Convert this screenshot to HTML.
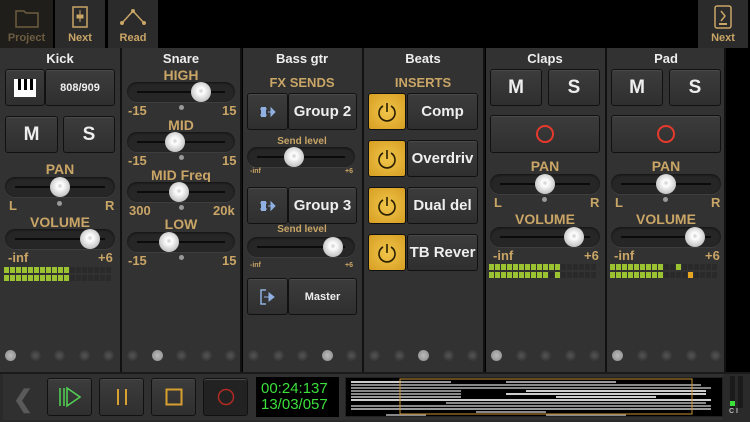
<!DOCTYPE html><html><head><meta charset="utf-8"><style>
*{margin:0;padding:0;box-sizing:border-box}
body{width:750px;height:422px;background:#000;position:relative;overflow:hidden;font-family:"Liberation Sans",sans-serif;font-weight:bold}
.a{position:absolute}
.strip{position:absolute;top:48px;height:324px;background:#323232;border-right:2px solid #111}
.t{position:absolute;color:#eee;font-size:13px;text-align:center}
.g{position:absolute;color:#c9a566;text-align:center;font-size:13px}
.btn{position:absolute;background:linear-gradient(#3c3c3c,#2f2f2f);border:1px solid #111;border-radius:3px;box-shadow:inset 0 1px 0 #4a4a4a;color:#eee;display:flex;align-items:center;justify-content:center}
.sl{position:absolute;height:20px;border-radius:10px;background:#262626;box-shadow:inset 0 1px 2px #111,0 1px 0 #3e3e3e}
.sl i{position:absolute;left:10px;right:10px;top:9px;height:2px;background:#0b0b0b}
.sl b{position:absolute;top:0px;width:20px;height:20px;margin-left:-10px;border-radius:50%;background:radial-gradient(circle at 50% 45%,#ccc 0,#fff 20%,#e8e8e8 40%,#bbb 80%,#888 100%)}
.dot{position:absolute;width:5px;height:5px;border-radius:50%;background:#999}
.bd{position:absolute;width:11px;height:11px;border-radius:50%;background:radial-gradient(#555,#2a2a2a);top:350px}
.bd.on{background:radial-gradient(#bbb,#888)}
.top{position:absolute;top:0;height:48px;background:#2b2b2b;color:#c9a566;font-size:11px;text-align:center}
.top span{position:absolute;bottom:4px;left:0;right:0}
.ins{position:absolute;left:368px;width:38px;height:37px;background:radial-gradient(#f0c54a,#d69e22);border:1px solid #111;border-radius:3px}
.meter{position:absolute;height:14px;display:flex;flex-direction:column;gap:2px}
.meter div{display:flex;gap:1px;height:6px}
.meter s{width:5px;height:6px;background:#2a2a2a}
.meter s.l{background:#9bc230}
.meter s.y{background:#e6a623}
</style></head><body>
<div class="top" style="left:0;width:53px;background:#1f1e1b;color:#6d5d40"><svg class="a" style="left:15px;top:8px" width="24" height="20"><path d="M1 3h8l2 2h12v14H1z" fill="none" stroke="#6d5d40" stroke-width="1.5"/></svg><span>Project</span></div>
<div class="top" style="left:55px;width:50px"><svg class="a" style="left:17px;top:6px" width="16" height="22"><rect x="1" y="1" width="14" height="20" fill="none" stroke="#c9a566" stroke-width="1.5"/><path d="M8 4v12M5 9h6v3H5z" stroke="#c9a566" fill="#c9a566"/></svg><span>Next</span></div>
<div class="top" style="left:108px;width:50px"><svg class="a" style="left:12px;top:8px" width="26" height="18"><path d="M2 15L13 3L24 15" fill="none" stroke="#c9a566" stroke-width="1.5"/><circle cx="2" cy="15" r="2" fill="#c9a566"/><circle cx="13" cy="3" r="2" fill="#c9a566"/><circle cx="24" cy="15" r="2" fill="#c9a566"/></svg><span>Read</span></div>
<div class="top" style="left:698px;width:50px"><svg class="a" style="left:16px;top:5px" width="18" height="24"><rect x="1" y="1" width="16" height="22" rx="2" fill="none" stroke="#c9a566" stroke-width="1.5"/><path d="M7 6l4 5-4 5" fill="none" stroke="#c9a566" stroke-width="1.5"/><rect x="5" y="18" width="8" height="2" fill="#c9a566"/></svg><span>Next</span></div>

<div class="strip" style="left:0;width:122px"></div>
<div class="strip" style="left:122px;width:120px"></div>
<div class="strip" style="left:243px;width:121px"></div>
<div class="strip" style="left:364px;width:121px"></div>
<div class="strip" style="left:486px;width:121px"></div>
<div class="strip" style="left:607px;width:119px"></div>

<div class="t" style="left:0;width:120px;top:51px">Kick</div>
<div class="btn" style="left:5px;top:69px;width:40px;height:37px"><svg width="22" height="18"><rect width="22" height="18" fill="#fff"/><rect x="4" y="0" width="3" height="11" fill="#000"/><rect x="10" y="0" width="3" height="11" fill="#000"/><rect x="16" y="0" width="3" height="11" fill="#000"/></svg></div>
<div class="btn" style="left:45px;top:69px;width:70px;height:37px;font-size:11px">808/909</div>
<div class="btn" style="left:5px;top:116px;width:53px;height:37px;font-size:19px">M</div>
<div class="btn" style="left:63px;top:116px;width:52px;height:37px;font-size:19px">S</div>
<div class="g" style="left:0;width:120px;top:161px;font-size:14px">PAN</div>
<div class="sl" style="left:5px;top:177px;width:110px"><i></i><b style="left:55px"></b></div>
<div class="g" style="left:9px;top:198px">L</div><div class="g" style="left:105px;top:198px">R</div>
<div class="dot" style="left:57px;top:201px"></div>
<div class="g" style="left:0;width:120px;top:214px;font-size:14px">VOLUME</div>
<div class="sl" style="left:5px;top:229px;width:110px"><i></i><b style="left:85px"></b></div>
<div class="g" style="left:8px;top:250px">-inf</div><div class="g" style="left:98px;top:250px">+6</div>
<div class="meter" style="left:4px;top:267px" id="m1"></div>

<div class="t" style="left:122px;width:118px;top:51px">Snare</div>
<div class="g" style="left:122px;width:118px;top:67px;font-size:14px">HIGH</div>
<div class="sl" style="left:127px;top:82px;width:108px"><i></i><b style="left:74px"></b></div>
<div class="g" style="left:128px;top:103px">-15</div><div class="g" style="left:222px;top:103px">15</div><div class="dot" style="left:179px;top:105px"></div>
<div class="g" style="left:122px;width:118px;top:117px;font-size:14px">MID</div>
<div class="sl" style="left:127px;top:132px;width:108px"><i></i><b style="left:48px"></b></div>
<div class="g" style="left:128px;top:153px">-15</div><div class="g" style="left:222px;top:153px">15</div><div class="dot" style="left:179px;top:155px"></div>
<div class="g" style="left:122px;width:118px;top:167px;font-size:14px">MID Freq</div>
<div class="sl" style="left:127px;top:182px;width:108px"><i></i><b style="left:52px"></b></div>
<div class="g" style="left:129px;top:203px">300</div><div class="g" style="left:213px;top:203px">20k</div><div class="dot" style="left:179px;top:205px"></div>
<div class="g" style="left:122px;width:118px;top:216px;font-size:14px">LOW</div>
<div class="sl" style="left:127px;top:232px;width:108px"><i></i><b style="left:42px"></b></div>
<div class="g" style="left:128px;top:253px">-15</div><div class="g" style="left:222px;top:253px">15</div><div class="dot" style="left:179px;top:255px"></div>

<div class="t" style="left:243px;width:118px;top:51px">Bass gtr</div>
<div class="g" style="left:243px;width:118px;top:75px">FX SENDS</div>
<div class="btn" style="left:247px;top:93px;width:41px;height:37px"><svg width="18" height="14"><rect x="2" y="2" width="5" height="10" fill="#8fb0e0"/><path d="M1 4h7M1 10h7" stroke="#8fb0e0"/><path d="M9 7h4M12 3l4 4-4 4z" fill="#8fb0e0" stroke="#8fb0e0"/></svg></div>
<div class="btn" style="left:288px;top:93px;width:69px;height:37px;font-size:15px">Group 2</div>
<div class="g" style="left:243px;width:118px;top:136px;font-size:10px">Send level</div>
<div class="sl" style="left:247px;top:147px;width:108px"><i></i><b style="left:47px"></b></div>
<div class="g" style="left:250px;top:168px;font-size:7px">-inf</div><div class="g" style="left:345px;top:168px;font-size:7px">+6</div>
<div class="btn" style="left:247px;top:187px;width:41px;height:37px"><svg width="18" height="14"><rect x="2" y="2" width="5" height="10" fill="#8fb0e0"/><path d="M1 4h7M1 10h7" stroke="#8fb0e0"/><path d="M9 7h4M12 3l4 4-4 4z" fill="#8fb0e0" stroke="#8fb0e0"/></svg></div>
<div class="btn" style="left:288px;top:187px;width:69px;height:37px;font-size:15px">Group 3</div>
<div class="g" style="left:243px;width:118px;top:224px;font-size:10px">Send level</div>
<div class="sl" style="left:247px;top:237px;width:108px"><i></i><b style="left:86px"></b></div>
<div class="g" style="left:250px;top:262px;font-size:7px">-inf</div><div class="g" style="left:345px;top:262px;font-size:7px">+6</div>
<div class="btn" style="left:247px;top:278px;width:41px;height:37px"><svg width="16" height="16"><path d="M6 1H1v14h5" fill="none" stroke="#8fb0e0" stroke-width="1.5"/><path d="M4 8h7M9 4l5 4-5 4z" fill="#8fb0e0" stroke="#8fb0e0"/></svg></div>
<div class="btn" style="left:288px;top:278px;width:69px;height:37px;font-size:11px">Master</div>

<div class="t" style="left:364px;width:118px;top:51px">Beats</div>
<div class="g" style="left:364px;width:118px;top:75px">INSERTS</div>
<div class="ins" style="top:93px"></div><div class="btn" style="left:407px;top:93px;width:71px;height:37px;font-size:15px">Comp</div>
<div class="ins" style="top:140px"></div><div class="btn" style="left:407px;top:140px;width:71px;height:37px;font-size:15px">Overdriv</div>
<div class="ins" style="top:187px"></div><div class="btn" style="left:407px;top:187px;width:71px;height:37px;font-size:15px">Dual del</div>
<div class="ins" style="top:234px"></div><div class="btn" style="left:407px;top:234px;width:71px;height:37px;font-size:15px">TB Rever</div>
<svg class="a" style="left:377px;top:102px" width="20" height="210"><g fill="none" stroke="#2a2000" stroke-width="1.6"><path d="M6 4a8 8 0 1 0 8 0M10 1v9"/><path transform="translate(0,47)" d="M6 4a8 8 0 1 0 8 0M10 1v9"/><path transform="translate(0,94)" d="M6 4a8 8 0 1 0 8 0M10 1v9"/><path transform="translate(0,141)" d="M6 4a8 8 0 1 0 8 0M10 1v9"/></g></svg>

<div class="t" style="left:486px;width:118px;top:51px">Claps</div>
<div class="t" style="left:607px;width:118px;top:51px">Pad</div>
<div class="btn" style="left:490px;top:69px;width:52px;height:37px;font-size:19px">M</div>
<div class="btn" style="left:548px;top:69px;width:52px;height:37px;font-size:19px">S</div>
<div class="btn" style="left:611px;top:69px;width:52px;height:37px;font-size:19px">M</div>
<div class="btn" style="left:669px;top:69px;width:52px;height:37px;font-size:19px">S</div>
<div class="btn" style="left:490px;top:115px;width:110px;height:38px"><svg width="20" height="20"><circle cx="10" cy="10" r="8" fill="none" stroke="#e53a2c" stroke-width="2"/></svg></div>
<div class="btn" style="left:611px;top:115px;width:110px;height:38px"><svg width="20" height="20"><circle cx="10" cy="10" r="8" fill="none" stroke="#e53a2c" stroke-width="2"/></svg></div>
<div class="g" style="left:486px;width:118px;top:158px;font-size:14px">PAN</div>
<div class="g" style="left:607px;width:118px;top:158px;font-size:14px">PAN</div>
<div class="sl" style="left:490px;top:174px;width:110px"><i></i><b style="left:55px"></b></div>
<div class="sl" style="left:611px;top:174px;width:110px"><i></i><b style="left:55px"></b></div>
<div class="g" style="left:494px;top:195px">L</div><div class="g" style="left:590px;top:195px">R</div><div class="dot" style="left:542px;top:197px"></div>
<div class="g" style="left:615px;top:195px">L</div><div class="g" style="left:711px;top:195px">R</div><div class="dot" style="left:663px;top:197px"></div>
<div class="g" style="left:486px;width:118px;top:211px;font-size:14px">VOLUME</div>
<div class="g" style="left:607px;width:118px;top:211px;font-size:14px">VOLUME</div>
<div class="sl" style="left:490px;top:227px;width:110px"><i></i><b style="left:84px"></b></div>
<div class="sl" style="left:611px;top:227px;width:110px"><i></i><b style="left:84px"></b></div>
<div class="g" style="left:493px;top:248px">-inf</div><div class="g" style="left:584px;top:248px">+6</div>
<div class="g" style="left:614px;top:248px">-inf</div><div class="g" style="left:705px;top:248px">+6</div>
<div class="meter" style="left:489px;top:264px" id="m2"></div>
<div class="meter" style="left:610px;top:264px" id="m3"></div>

<div id="dots"></div>

<div class="a" style="left:0;top:372px;width:750px;height:50px;background:#2a2a2a;border-top:2px solid #1a1a1a"></div>
<div class="a" style="left:3px;top:374px;width:720px;height:46px;background:#303030"></div>
<div class="a" style="left:13px;top:385px;color:#5a5a5a;font-size:24px">❮</div>
<div class="btn" style="left:47px;top:378px;width:45px;height:38px"><svg width="24" height="22"><path d="M2 2v18M6 2v18M9 2l13 9-13 9z" fill="none" stroke="#52d452" stroke-width="1.5"/></svg></div>
<div class="btn" style="left:99px;top:378px;width:45px;height:38px"><svg width="12" height="18"><path d="M2 1v16M10 1v16" stroke="#d8a030" stroke-width="2"/></svg></div>
<div class="btn" style="left:151px;top:378px;width:45px;height:38px"><svg width="18" height="18"><rect x="1.5" y="1.5" width="15" height="15" fill="none" stroke="#d8a030" stroke-width="2"/></svg></div>
<div class="btn" style="left:203px;top:378px;width:45px;height:38px;background:#222"><svg width="18" height="18"><circle cx="9" cy="9" r="7.5" fill="none" stroke="#b02a22" stroke-width="1.5"/></svg></div>
<div class="a" style="left:256px;top:377px;width:83px;height:40px;background:#000;color:#3be03b;font-weight:normal;font-size:15px;line-height:16px;padding:4px 0 0 5px">00:24:137<br>13/03/057</div>
<div class="a" style="left:345px;top:377px;width:378px;height:40px;background:#000;border:1px solid #222"></div>
<svg class="a" style="left:346px;top:378px" width="376" height="38" id="ov"></svg>
<div class="a" style="left:730px;top:376px;width:5px;height:32px;background:#1b1b1b"></div>
<div class="a" style="left:738px;top:376px;width:5px;height:32px;background:#1b1b1b"></div>
<div class="a" style="left:730px;top:401px;width:5px;height:5px;background:#3be03b"></div>
<div class="a" style="left:729px;top:408px;color:#bbb;font-size:7px">C I</div>
<script>
function meter(id,n1,n2,extra){var m=document.getElementById(id),h='';[n1,n2].forEach(function(n,r){h+='<div>';for(var i=0;i<18;i++){var c='';if(i<n)c='l';if(extra&&extra[r]&&extra[r][i])c=extra[r][i];h+='<s class="'+c+'"></s>';}h+='</div>';});m.innerHTML=h;}
meter('m1',11,11);meter('m2',12,10,[{},{11:'l'}]);meter('m3',9,9,[{11:'l'},{13:'y'}]);
var xs=[0,122,243,364,486,607],on=[0,1,3,2,0,0],d='';xs.forEach(function(x,k){for(var i=0;i<5;i++)d+='<div class="bd'+(i==on[k]?' on':'')+'" style="left:'+(x+5+i*24.5)+'px"></div>';});
document.getElementById('dots').innerHTML=d;
var s='',L=[[5,3,50,'#ccc'],[55,3,50,'#999'],[160,3,50,'#999'],[210,3,60,'#999'],[5,6,350,'#888'],[5,9,360,'#888'],[5,12,110,'#888'],[180,12,180,'#ccc'],[5,15,110,'#888'],[160,15,200,'#ccc'],[5,18,110,'#999'],[210,18,100,'#ccc'],[5,21,360,'#ccc'],[100,24,260,'#888'],[5,27,360,'#888'],[5,30,360,'#999'],[130,33,70,'#888'],[40,36,40,'#888'],[200,36,80,'#888'],[5,40,370,'#ccc']];
L.forEach(function(l){s+='<rect x="'+l[0]+'" y="'+l[1]+'" width="'+l[2]+'" height="2" fill="'+l[3]+'"/>';});
s+='<rect x="54" y="1" width="292" height="35" fill="none" stroke="#c9933a"/>';
document.getElementById('ov').innerHTML=s;
</script>
</body></html>
